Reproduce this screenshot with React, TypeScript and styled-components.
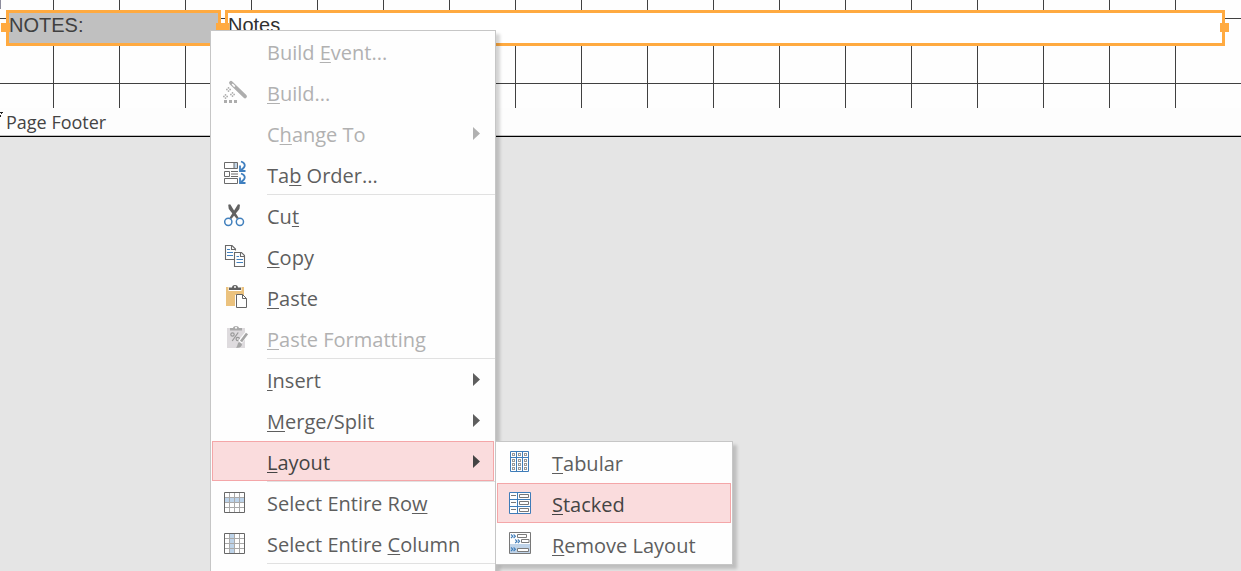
import React from 'react';
import styled, { createGlobalStyle } from 'styled-components';

const GlobalStyle = createGlobalStyle`
  * { box-sizing: border-box; }
  body { margin: 0; background: #e5e5e5; }
`;

const uiFont = `'Open Sans', 'Noto Sans', sans-serif`;

const Designer = styled.main`
  position: relative;
  min-height: 100vh;
  overflow: hidden;
  background: #e5e5e5;
  font-family: ${uiFont};
`;

const DetailSection = styled.section`
  display: flex;
  gap: 4px;
  padding: 10px 16px 62px 6px;
  background-color: #fefefe;
  background-image: linear-gradient(#8c8c9c, #8c8c9c),
    linear-gradient(to right, #404040 1px, transparent 1px),
    linear-gradient(to bottom, #404040 1px, transparent 1px);
  background-size: 1px 9px, 66px 100%, 100% 65px;
  background-position: 0 0, 53px 0, 0 18px;
  background-repeat: no-repeat, repeat, repeat;
`;

const Frame = styled.div<{ $wide?: boolean }>`
  position: relative;
  display: flex;
  height: 36px;
  border: 3px solid #ffaa40;
  background: ${(p) => (p.$wide ? '#ffffff' : '#c0c0c0')};
  flex: ${(p) => (p.$wide ? '1 1 auto' : '0 0 215px')};
`;

const Handle = styled.span<{ $side: 'left' | 'right' }>`
  position: absolute;
  top: 10px;
  ${(p) => p.$side}: ${(p) => (p.$side === 'left' ? '-8px' : '-7px')};
  width: 9px;
  height: 9px;
  background: #ffaa40;
`;

const FieldLabel = styled.label`
  font: 20px/24px 'Liberation Sans', Arial, sans-serif;
  color: #404040;
`;

const FieldInput = styled.input`
  flex: 1;
  min-width: 0;
  height: 24px;
  padding: 0;
  border: 0;
  outline: 0;
  background: transparent;
  font: 20px/24px 'Liberation Sans', Arial, sans-serif;
  color: #303030;
`;

const SectionBar = styled.header`
  position: relative;
  height: 29px;
  padding-left: 6px;
  border-bottom: 1px solid #000;
  background: #fdfdfd;
  box-shadow: inset 0 -1px #c0c0c0;
`;

const SectionMark = styled.svg`
  position: absolute;
  top: 4px;
  left: 0;
`;

const SectionTitle = styled.h2`
  margin: 0;
  font-size: 18px;
  font-weight: 400;
  line-height: 28px;
  color: #444;
`;

const MenuPanel = styled.div`
  position: absolute;
  border: 1px solid #c6c6c6;
  background: #fefefe;
  box-shadow: 4px 4px 3px rgba(0, 0, 0, 0.17);
`;

const ContextMenu = styled(MenuPanel)`
  top: 30px;
  left: 210px;
  bottom: 0;
  width: 286px;
  border-bottom: 0;
`;

const SubMenu = styled(MenuPanel)`
  top: 441px;
  left: 495px;
  width: 238px;
`;

const Group = styled.div`
  display: grid;
  gap: 1px;
  padding: 0 1px;
`;

const Separator = styled.hr`
  height: 1px;
  margin: 0 0 0 56px;
  border: 0;
  background: #e1e1e1;
`;

const Item = styled.button<{ $active?: boolean }>`
  display: flex;
  align-items: center;
  gap: 20px;
  width: 100%;
  height: 40px;
  padding: 0 13px 0 10px;
  border: 1px solid ${(p) => (p.$active ? '#f4a6a8' : 'transparent')};
  background: ${(p) => (p.$active ? '#fadcdd' : 'transparent')};
  font-family: ${uiFont};
  font-size: 20px;
  line-height: 28px;
  text-align: left;
  color: ${(p) => (p.$active ? '#444444' : '#5e5e5e')};

  &:disabled { color: #b1b1b1; }
`;

const IconSlot = styled.span`
  flex: 0 0 24px;
  height: 24px;

  svg { display: block; overflow: visible; }
`;

const Caption = styled.span`
  flex: 1;
  padding-top: 3px;
  white-space: nowrap;

  u {
    text-decoration-thickness: 1px;
    text-decoration-skip-ink: none;
    text-underline-offset: 2px;
  }
`;

const Svg = ({ children }: { children: React.ReactNode }) => (
  <svg width="24" height="24" viewBox="0 0 24 24" fill="none" aria-hidden="true">
    {children}
  </svg>
);

const Arrow = () => (
  <svg width="7" height="13" viewBox="0 0 7 13" aria-hidden="true">
    <path d="M0 0L7 6.5L0 13Z" fill="currentColor" />
  </svg>
);

const Spark = ({ x, y }: { x: number; y: number }) => (
  <path
    d={`M${x} ${y - 2.5}V${y - 0.8}M${x} ${y + 0.8}V${y + 2.5}M${x - 2.5} ${y}H${x - 0.8}M${x + 0.8} ${y}H${x + 2.5}`}
    stroke="#b1b1b1"
    strokeWidth="1.4"
  />
);

const WandIcon = () => (
  <Svg>
    <path d="M8 2.8L22 16.4" stroke="#adadad" strokeWidth="3.8" strokeLinecap="round" />
    <path d="M9.2 4L11.8 6.6" stroke="#fefefe" strokeWidth="1.6" />
    <Spark x={5.5} y={9.5} />
    <Spark x={9.5} y={14.5} />
    <Spark x={2.5} y={16.5} />
    <path d="M1 20h3v3h-3zM6 20h3v3h-3zM11 20h3v3h-3z" fill="#adadad" />
  </Svg>
);

const TabOrderIcon = () => (
  <Svg>
    <path d="M11 1H14V6H11Z" fill="#c3d6e8" />
    <path d="M1.5 0.5H14.5V6.5H1.5ZM11 1V6M1.5 9.5H6.5V14.5H1.5ZM8 9.5H15M8 12H15M8 14.5H15M1.5 16.5H14.5V21.5H1.5Z" stroke="#6a6a6a" />
    <path d="M18 -0.5C22.5 1 23.5 4.5 18 8M18 11.5C22.5 13 23.5 16.5 18 20" stroke="#3f7fbf" strokeWidth="1.8" />
    <path d="M17 3.5V9H22.5M17 15.5V21H22.5" stroke="#3f7fbf" strokeWidth="1.8" />
  </Svg>
);

const CutIcon = () => (
  <Svg>
    <path d="M5.2 1.8L7.2 1.2L15.6 14.8L13.8 16L5.8 6Z" fill="#616161" />
    <path d="M17 1.8L15 1.2L6.6 14.8L8.4 16L16.4 6Z" fill="#616161" />
    <circle cx="5.3" cy="18.8" r="3.6" stroke="#4280bd" strokeWidth="1.5" />
    <circle cx="16.9" cy="18.8" r="3.6" stroke="#4280bd" strokeWidth="1.5" />
  </Svg>
);

const CopyIcon = () => (
  <Svg>
    <path d="M11 15.5H2.5V1.5H9L12.5 5V6.5M8.5 1.5V5.5H12.5M13.5 8.5H18.5L21.5 11.5V22.5H11.5V8.5H13.5M17.5 8.5V12.5H21.5" stroke="#686868" strokeWidth="1.1" />
    <path d="M4 5.5H7M4 8.5H10M4 11.5H10M13.5 12.5H16M13.5 15.5H20M13.5 18.5H20" stroke="#4280bd" strokeWidth="1.2" />
  </Svg>
);

const PasteIcon = () => (
  <Svg>
    <path d="M3 2H21V10H12V21H3Z" fill="#ebc27e" />
    <path d="M5.5 1.5H18.5V6H5.5Z" fill="#fefefe" />
    <path d="M6 2.5H9C9 -0.8 15 -0.8 15 2.5H18V5H6Z" fill="#606060" />
    <circle cx="12" cy="2" r="1" fill="#fefefe" />
    <path d="M13.5 9.5H19.5L23.5 13.5V22.5H13.5ZM19.5 9.5V13.5H23.5" fill="#fefefe" stroke="#656565" />
  </Svg>
);

const PasteFormatIcon = () => (
  <Svg>
    <path d="M4 2H22V22H4Z" fill="#dedbde" />
    <path d="M7 2H10C10 -0.7 16 -0.7 16 2H19V4.5H7Z" fill="#a9a9a9" />
    <circle cx="13" cy="1.8" r="1" fill="#fefefe" />
    <circle cx="9.5" cy="8.5" r="1.7" stroke="#999" strokeWidth="1.2" />
    <circle cx="14.8" cy="13" r="1.7" stroke="#999" strokeWidth="1.2" />
    <path d="M15.2 6.5L9.2 15" stroke="#999" strokeWidth="1.3" />
    <path d="M23.5 8L17 16" stroke="#fefefe" strokeWidth="4.5" />
    <path d="M24 7.5L18 15.5" stroke="#a5a5a5" strokeWidth="2.6" />
    <path d="M13 21.5C15 20 14 17.5 16 16L19 18C19 21 16 22.5 13 21.5Z" fill="#a5a5a5" />
  </Svg>
);

const GridIcon = ({ column }: { column?: boolean }) => (
  <Svg>
    <path d="M2 2H21V22H2Z" fill="#fefefe" />
    <path d={column ? 'M7 2H11V22H7Z' : 'M2 8H21V12H2Z'} fill="#bdd3e9" />
    <path d="M6.5 2V22M11.5 2V22M16.5 2V22M2 7.5H21M2 12.5H21M2 17.5H21" stroke="#a9a9a9" />
    <path d="M1.5 2.5H21.5V22.5H1.5Z" stroke="#666" />
  </Svg>
);

const TabularIcon = () => (
  <Svg>
    <path d="M2.5 1.5H20.5V21.5H2.5ZM8.5 1.5V21.5M14.5 1.5V21.5M2.5 7.5H20.5" fill="#fefefe" stroke="#3f7cb8" />
    {[5.5, 11.5, 17.5].map((x) =>
      [4.5, 10.5, 14.5, 18.5].map((y) => (
        <rect key={`${x}-${y}`} x={x - 1} y={y - 1} width="2" height="2" stroke="#999" />
      )),
    )}
  </Svg>
);

const StackedIcon = () => (
  <Svg>
    <path d="M1.5 1.5H22.5V22.5H1.5ZM9.5 1.5V22.5M1.5 8.5H22.5M1.5 15.5H22.5" fill="#fefefe" stroke="#3f7cb8" />
    <path d="M3 4.5H8M3 11.5H8M3 18.5H8M11.5 3.5H20.5V6.5H11.5ZM11.5 10.5H20.5V13.5H11.5ZM11.5 17.5H20.5V20.5H11.5Z" stroke="#777" />
  </Svg>
);

const RemoveLayoutIcon = () => (
  <Svg>
    <path d="M1.5 0.5H22.5V21.5H1.5Z" fill="#fefefe" />
    <path d="M2 12H22V21H2Z" fill="#bfd3e8" />
    <path d="M1.5 0.5H22.5V21.5H1.5Z" stroke="#777" />
    <path d="M9.5 2.5H18.5V5.5H9.5ZM13.5 7.5H21V10.5H13.5ZM9.5 16.5H20.5V19.5H9.5Z" fill="#fefefe" stroke="#7b7b7b" />
    <path d="M3 2.5L4.8 4.2L3 6M5.6 2.5L7.4 4.2L5.6 6M7.2 7.5L9 9.2L7.2 11M9.8 7.5L11.6 9.2L9.8 11M3 15.5L4.8 17.2L3 19M5.6 15.5L7.4 17.2L5.6 19" stroke="#3f7cb8" strokeWidth="1.1" />
  </Svg>
);

type Entry = {
  label: React.ReactNode;
  icon?: React.ReactNode;
  disabled?: boolean;
  active?: boolean;
  submenu?: boolean;
};

const mainGroups: Entry[][] = [
  [
    { label: <>Build <u>E</u>vent...</>, disabled: true },
    { label: <><u>B</u>uild...</>, icon: <WandIcon />, disabled: true },
    { label: <>C<u>h</u>ange To</>, disabled: true, submenu: true },
    { label: <>Ta<u>b</u> Order...</>, icon: <TabOrderIcon /> },
  ],
  [
    { label: <>Cu<u>t</u></>, icon: <CutIcon /> },
    { label: <><u>C</u>opy</>, icon: <CopyIcon /> },
    { label: <><u>P</u>aste</>, icon: <PasteIcon /> },
    { label: <><u>P</u>aste Formatting</>, icon: <PasteFormatIcon />, disabled: true },
  ],
  [
    { label: <><u>I</u>nsert</>, submenu: true },
    { label: <><u>M</u>erge/Split</>, submenu: true },
    { label: <><u>L</u>ayout</>, submenu: true, active: true },
  ],
  [
    { label: <>Select Entire Ro<u>w</u></>, icon: <GridIcon /> },
    { label: <>Select Entire <u>C</u>olumn</>, icon: <GridIcon column /> },
  ],
];

const layoutEntries: Entry[] = [
  { label: <><u>T</u>abular</>, icon: <TabularIcon /> },
  { label: <><u>S</u>tacked</>, icon: <StackedIcon />, active: true },
  { label: <><u>R</u>emove Layout</>, icon: <RemoveLayoutIcon /> },
];

const MenuGroup = ({ entries }: { entries: Entry[] }) => (
  <Group role="group">
    {entries.map((e, i) => (
      <Item
        key={i}
        type="button"
        role="menuitem"
        disabled={e.disabled}
        $active={e.active}
        aria-haspopup={e.submenu ? 'menu' : undefined}
      >
        <IconSlot>{e.icon}</IconSlot>
        <Caption>{e.label}</Caption>
        {e.submenu && <Arrow />}
      </Item>
    ))}
  </Group>
);

export default function App() {
  return (
    <>
      <GlobalStyle />
      <Designer>
        <DetailSection>
          <Frame>
            <Handle $side="left" />
            <FieldLabel htmlFor="notes">NOTES:</FieldLabel>
            <Handle $side="right" />
          </Frame>
          <Frame $wide>
            <Handle $side="left" />
            <FieldInput id="notes" defaultValue="Notes" />
            <Handle $side="right" />
          </Frame>
        </DetailSection>
        <SectionBar>
          <SectionMark width="3" height="5" viewBox="0 0 3 5" aria-hidden="true">
            <path d="M0 0H3V1H2V2H1V5H0V3H1V1H0Z" fill="#222" />
          </SectionMark>
          <SectionTitle>Page Footer</SectionTitle>
        </SectionBar>
        <ContextMenu role="menu">
          {mainGroups.map((entries, i) => (
            <React.Fragment key={i}>
              <MenuGroup entries={entries} />
              <Separator />
            </React.Fragment>
          ))}
        </ContextMenu>
        <SubMenu role="menu">
          <MenuGroup entries={layoutEntries} />
        </SubMenu>
      </Designer>
    </>
  );
}
